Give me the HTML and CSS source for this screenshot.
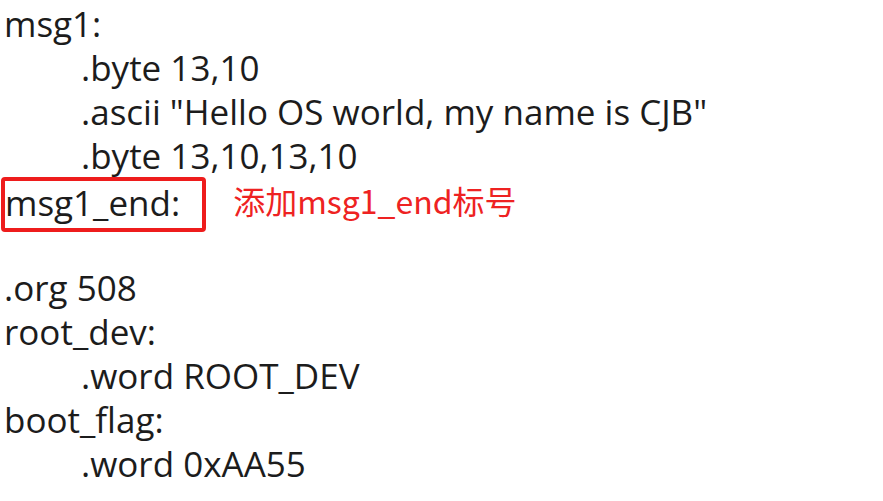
FILE: index.html
```html
<!DOCTYPE html>
<html lang="zh-CN">
<head>
  <meta charset="UTF-8">
  <title>msg1_end</title>
  <link rel="stylesheet" href="styles.css">
</head>
<body>

<div class="code">
  <div class="line">msg1:</div>
  <div class="line indent">.byte 13,10</div>
  <div class="line indent">.ascii "Hello OS world, my name is CJB"</div>
  <div class="line indent">.byte 13,10,13,10</div>
  <div class="line marked">
    <span class="label-box">msg1_end:</span>
    <span class="note">添加msg1_end标号</span>
  </div>
  <div class="line"></div>
  <div class="line">.org 508</div>
  <div class="line">root_dev:</div>
  <div class="line indent">.word ROOT_DEV</div>
  <div class="line">boot_flag:</div>
  <div class="line indent">.word 0xAA55</div>
</div>

</body>
</html>
```

FILE: styles.css
```css
body {
  margin: 0;
  background-color: #fff;
}

.code {
  padding: 2px 0 0 4px;
  font-family: "Open Sans", "DejaVu Sans", sans-serif;
  font-size: 35px;
  color: #1c1c1c;
}

.line {
  height: 44px;
  line-height: 44px;
  white-space: pre;
}

.indent {
  padding-left: 77px;
}

.marked {
  display: flex;
  align-items: center;
}

.label-box {
  height: 47px;
  line-height: 44px;
  margin: 3px 0 -5px -3px;
  padding: 0 22px 0 0;
  border: 4px solid #ee1c1c;
  border-radius: 4px;
}

.note {
  margin-left: 27px;
  font-family: "Noto Sans CJK SC", "Noto Sans", sans-serif;
  font-size: 32px;
  color: #ee2222;
}
```
